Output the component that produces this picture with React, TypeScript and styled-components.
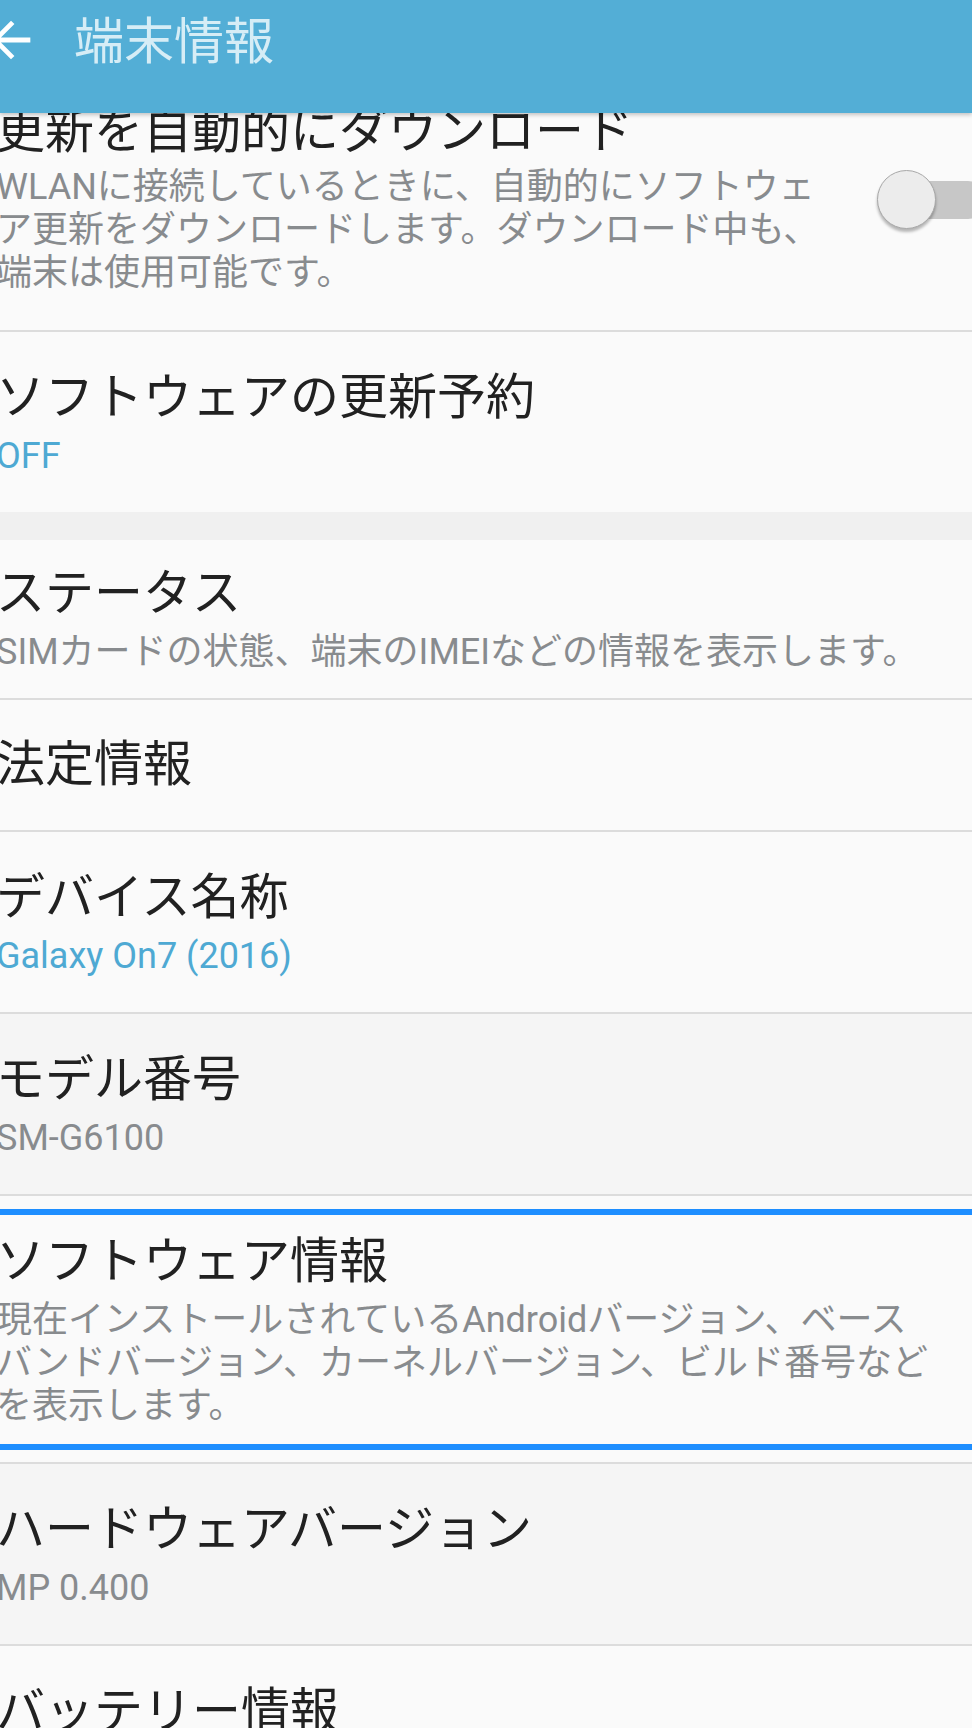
import React from "react";
import styled, { createGlobalStyle, css } from "styled-components";

const GlobalStyle = createGlobalStyle`
  html, body {
    margin: 0;
    padding: 0;
    background: #fafafa;
    overflow: hidden;
  }
  body {
    font-family: "Roboto", "Noto Sans CJK JP", sans-serif;
    -webkit-font-smoothing: antialiased;
  }
  * { box-sizing: border-box; }
`;

const Screen = styled.div`
  width: 972px;
  height: 1728px;
  overflow: hidden;
  background: #fafafa;
`;

const AppBar = styled.header`
  position: relative;
  z-index: 2;
  height: 113px;
  background: #53aed6;
  box-shadow: 0 2px 4px rgba(0, 0, 0, 0.22);
`;

const BarRow = styled.div`
  height: 84px;
  display: flex;
  align-items: center;
`;

const BackButton = styled.div`
  width: 58px;
  height: 58px;
  margin-left: -18px;
  margin-top: -4px;
  flex-shrink: 0;
  display: flex;
  svg { width: 58px; height: 58px; display: block; }
`;

const BarTitle = styled.h1`
  margin: 0 0 0 34px;
  font-size: 50px;
  font-weight: 400;
  line-height: 84px;
  color: #d6edf6;
  letter-spacing: 0;
`;

const List = styled.main`
  margin-top: -47px;
  margin-left: -50px;
  width: 1072px;
`;

type ItemProps = {
  $shaded?: boolean;
  $pt: number;
  $pb: number;
  $divider: boolean;
  $padRight: number;
  $focused?: boolean;
};

const Item = styled.div<ItemProps>`
  position: relative;
  display: flex;
  align-items: center;
  padding: ${(p) => p.$pt}px ${(p) => p.$padRight}px ${(p) => p.$pb}px 46px;
  background: ${(p) => (p.$shaded ? "#f5f5f5" : "#fafafa")};
  border-bottom: ${(p) => (p.$divider ? "2px solid #dcdcdc" : "none")};
  ${(p) =>
    p.$focused &&
    css`
      &::after {
        content: "";
        position: absolute;
        left: 10px;
        right: 10px;
        top: 13px;
        bottom: 12px;
        border: 6px solid #1e8eff;
        pointer-events: none;
      }
    `}
`;

const ItemText = styled.div`
  flex: 1;
  min-width: 0;
`;

const ItemTitle = styled.div`
  font-size: 49px;
  line-height: 58px;
  color: #212121;
  white-space: nowrap;
`;

const ItemSummary = styled.div<{ $tone: "grey" | "blue"; $gap: number }>`
  margin-top: ${(p) => p.$gap}px;
  font-size: 36px;
  line-height: 43px;
  color: ${(p) => (p.$tone === "blue" ? "#4ea9d3" : "#888b8e")};
  line-break: normal;
`;

const SectionGap = styled.div`
  height: 28px;
  background: #f0f0f0;
`;

const Switch = styled.div`
  position: relative;
  flex-shrink: 0;
  width: 110px;
  height: 60px;
  margin-left: 37px;
  margin-top: 2px;
`;

const SwitchTrack = styled.div`
  position: absolute;
  left: 20px;
  right: 0;
  top: 11px;
  height: 38px;
  border-radius: 19px;
  background: #c7c7c7;
`;

const SwitchThumb = styled.div`
  position: absolute;
  left: 0;
  top: 0;
  width: 59px;
  height: 59px;
  border-radius: 50%;
  background: #ececec;
  border: 1.5px solid #a8a8a8;
  box-shadow: 0 3px 3px rgba(0, 0, 0, 0.28);
`;

type Row = {
  title: string;
  summary?: string;
  tone?: "grey" | "blue";
  shaded?: boolean;
  pt?: number;
  pb?: number;
  gap?: number;
  divider?: boolean;
  toggle?: boolean;
  focused?: boolean;
  gapAfter?: boolean;
};

const rows: Row[] = [
  {
    title: "更新を自動的にダウンロード",
    summary:
      "WLANに接続しているときに、自動的にソフトウェア更新をダウンロードします。ダウンロード中も、端末は使用可能です。",
    tone: "grey",
    gap: 5,
    pb: 35,
    toggle: true,
  },
  {
    title: "ソフトウェアの更新予約",
    summary: "OFF",
    tone: "blue",
    divider: false,
    gapAfter: true,
  },
  {
    title: "ステータス",
    summary: "SIMカードの状態、端末のIMEIなどの情報を表示します。",
    tone: "grey",
    pt: 25,
    pb: 24,
  },
  { title: "法定情報", pt: 36, pb: 36 },
  { title: "デバイス名称", summary: "Galaxy On7 (2016)", tone: "blue" },
  { title: "モデル番号", summary: "SM-G6100", tone: "grey", shaded: true },
  {
    title: "ソフトウェア情報",
    summary:
      "現在インストールされているAndroidバージョン、ベースバンドバージョン、カーネルバージョン、ビルド番号などを表示します。",
    tone: "grey",
    focused: true,
  },
  { title: "ハードウェアバージョン", summary: "MP 0.400", tone: "grey", shaded: true },
  { title: "バッテリー情報", summary: "", tone: "grey" },
];

const BackArrow = () => (
  <svg viewBox="0 0 24 24" aria-hidden="true">
    <path
      fill="#ffffff"
      d="M20 11H7.83l5.59-5.59L12 4l-8 8 8 8 1.41-1.41L7.83 13H20v-2z"
    />
  </svg>
);

export default function App() {
  return (
    <Screen>
      <GlobalStyle />
      <AppBar>
        <BarRow>
          <BackButton>
            <BackArrow />
          </BackButton>
          <BarTitle>端末情報</BarTitle>
        </BarRow>
      </AppBar>
      <List>
        {rows.map((r) => (
          <React.Fragment key={r.title}>
            <Item
              $shaded={r.shaded}
              $pt={r.pt ?? 37}
              $pb={r.pb ?? 34}
              $divider={r.divider ?? true}
              $padRight={r.toggle ? 35 : 79}
              $focused={r.focused}
            >
              <ItemText>
                <ItemTitle>{r.title}</ItemTitle>
                {r.summary !== undefined && r.summary !== "" && (
                  <ItemSummary $tone={r.tone ?? "grey"} $gap={r.gap ?? 8}>
                    {r.summary}
                  </ItemSummary>
                )}
              </ItemText>
              {r.toggle && (
                <Switch>
                  <SwitchTrack />
                  <SwitchThumb />
                </Switch>
              )}
            </Item>
            {r.gapAfter && <SectionGap />}
          </React.Fragment>
        ))}
      </List>
    </Screen>
  );
}
